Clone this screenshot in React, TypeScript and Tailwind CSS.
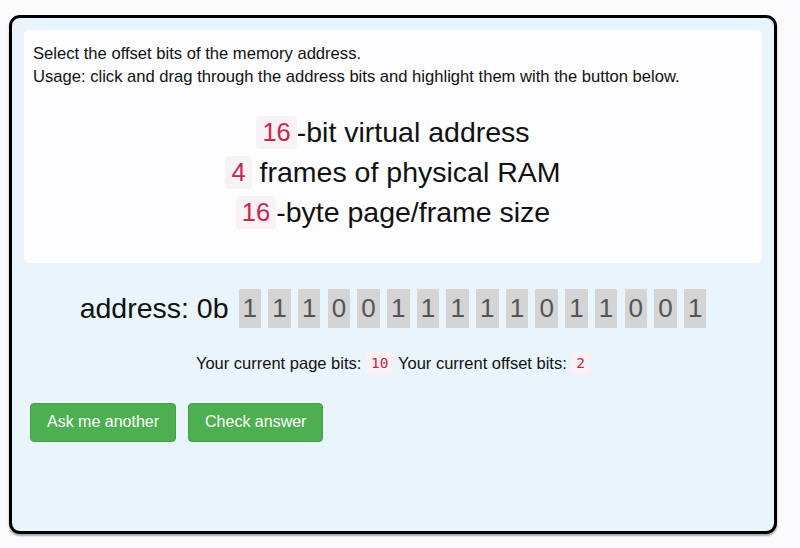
import React from "react"

const bits = "1110011111011001".split("")

function Code({ children, big }: { children: React.ReactNode; big?: boolean }) {
  if (big) {
    return (
      <span className="inline-block rounded-[4px] bg-[#f9f2f4] px-[6px] text-[#c7254e] leading-[33px] text-[25.5px]">
        {children}
      </span>
    )
  }
  return (
    <span className="inline-block rounded-[4px] bg-[#f9f2f4] px-[5px] font-['DejaVu_Sans_Mono',monospace] text-[14.5px] leading-[22px] text-[#c7254e]">
      {children}
    </span>
  )
}

export default function App() {
  return (
    <div className="min-h-[548px] bg-[#fbfbfe] pl-[9px] pt-[15px] font-['Liberation_Sans',Arial,sans-serif] text-[#111]">
      <div className="h-[519px] w-[768px] rounded-[11px] border-[3px] border-black bg-[#eaf4fc] p-[12px] shadow-[0_2px_2px_rgba(0,0,0,0.35)]">
        <div className="rounded-[5px] bg-[#fdfcfe] px-[9px] pt-[12px] pb-[31px]">
          <p className="text-[16.6px] leading-[23px]">Select the offset bits of the memory address.</p>
          <p className="text-[16.6px] leading-[23px]">
            Usage: click and drag through the address bits and highlight them with the button below.
          </p>
          <div className="mt-[24px] flex flex-col items-center text-[28.5px] leading-[40px]">
            <div className="flex items-center">
              <Code big>16</Code>
              <span>-bit virtual address</span>
            </div>
            <div className="flex items-center">
              <Code big>4</Code>
              <span>&nbsp;frames of physical RAM</span>
            </div>
            <div className="flex items-center">
              <Code big>16</Code>
              <span>-byte page/frame size</span>
            </div>
          </div>
        </div>

        <div className="mt-[24px] flex items-center justify-center">
          <span className="mr-[10px] text-[28.5px]">address: 0b</span>
          <div className="flex gap-[7.2px]">
            {bits.map((b, i) => (
              <span
                key={i}
                className="flex h-[39px] w-[22.5px] items-center justify-center bg-[#d4d4d4] text-[26px] text-[#555]"
              >
                {b}
              </span>
            ))}
          </div>
        </div>

        <div className="mt-[22px] flex items-center justify-center text-[16.5px] leading-[23px]">
          <span>Your current page bits:&nbsp;</span>
          <Code>10</Code>
          <span>&nbsp;Your current offset bits:&nbsp;</span>
          <Code>2</Code>
        </div>

        <div className="mt-[28px] flex gap-[12px] pl-[6px]">
          <button className="h-[39px] rounded-[4px] border border-[#45a049] bg-[#4caf50] px-[16px] text-[16px] text-white">
            Ask me another
          </button>
          <button className="h-[39px] rounded-[4px] border border-[#45a049] bg-[#4caf50] px-[16px] text-[16px] text-white">
            Check answer
          </button>
        </div>
      </div>
    </div>
  )
}
